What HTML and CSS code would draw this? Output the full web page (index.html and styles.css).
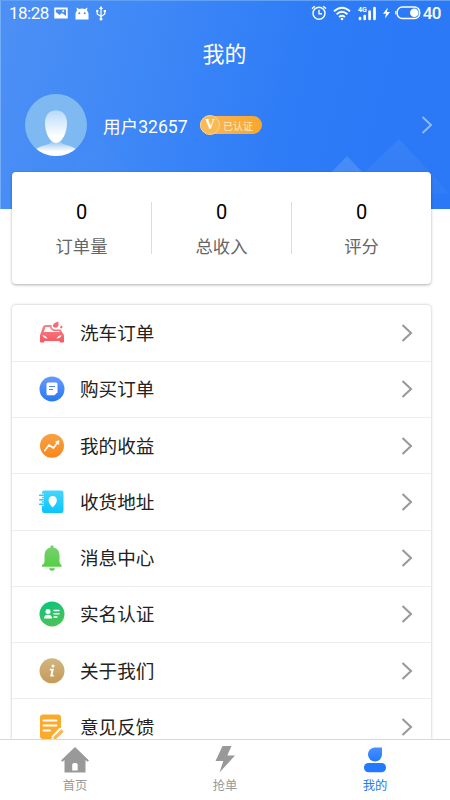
FILE: index.html
```html
<!DOCTYPE html>
<html lang="zh-CN">
<head>
<meta charset="utf-8">
<title>我的</title>
<link rel="stylesheet" href="styles.css">
</head>
<body>
<div class="app">
  <header class="header">
    <svg class="scenery" viewBox="0 0 450 209" aria-hidden="true">
      <defs><linearGradient id="hill" x1="0" y1="0" x2="0" y2="1"><stop offset="0" stop-color="#fff" stop-opacity=".06"/><stop offset="1" stop-color="#fff" stop-opacity=".03"/></linearGradient></defs>
      <path d="M399 139L450 194H342Z" fill="url(#hill)"/>
      <path d="M347 156L370 180H324Z" fill="#fff" fill-opacity=".13"/>
      <path d="M100 138L132 174H68Z" fill="#fff" fill-opacity=".015"/>
    </svg>
    <div class="status">
      <div class="status-left">
        <span class="clock">18:28</span>
        <svg class="s-pic" width="14" height="12" viewBox="0 0 14 12"><path fill="#fff" fill-rule="evenodd" d="M.3 .5H13.700V11.500H.3ZM1.800 2.500V5L5.500 8L8 6L12 9V2.500Z"/><circle cx="9.200" cy="4.300" r="1" fill="#fff"/></svg>
        <svg class="s-bot" width="14" height="13" viewBox="0 0 14 13"><path fill="#fff" fill-rule="evenodd" d="M1.500 .5L4 2Q7 .8 10 2L12.500 .5L12 3.500Q13.500 5 13.500 7V12.500H.5V7Q.5 5 2 3.500ZM4.300 5.300A1 1 0 1 0 4.310 7.300A1 1 0 1 0 4.300 5.300ZM9.700 5.300A1 1 0 1 0 9.710 7.300A1 1 0 1 0 9.700 5.300Z"/></svg>
        <svg class="s-usb" width="10" height="15" viewBox="0 0 10 15"><path d="M5 2V14M1.200 5V8L5 10.500M8.800 5V8L5 10.500" fill="none" stroke="#fff" stroke-width="1.200"/><path d="M5 0L7 3H3Z" fill="#fff"/><circle cx="5" cy="13" r="1.500" fill="#fff"/><circle cx="1.300" cy="5" r="1.200" fill="#fff"/><path d="M7.700 4H10V6.200H7.700Z" fill="#fff"/></svg>
      </div>
      <div class="status-right">
        <svg width="16" height="16" viewBox="0 0 16 16" fill="none" stroke="#fff" stroke-width="1.400"><circle cx="8" cy="8.300" r="6"/><path d="M8 4.800V8.700H11M1 3.600L3.800 1.200M12.200 1.200L15 3.600"/></svg>
        <svg class="s-wifi" width="18" height="15" viewBox="0 0 18 15" fill="none" stroke="#fff" stroke-width="1.900"><path d="M1 5.300Q9-1.900 17 5.300M3.600 8.200Q9 3.500 14.400 8.200M6.100 10.900Q9 8.500 11.900 10.900"/><circle cx="9" cy="13" r="1.300" fill="#fff" stroke="none"/></svg>
        <svg class="s-cell" width="19" height="15" viewBox="0 0 19 15"><text x="0" y="6" class="net">4G</text><path d="M2 12.200V13M6.700 10V13M11.600 5.500V13M16.500 2V13" stroke="#fff" stroke-width="2.700" stroke-linecap="round"/></svg>
        <svg class="s-bolt" width="7" height="12" viewBox="0 0 7 12"><path d="M4.800 .5L0 6.800H3L2 11.500L7 5H4Z" fill="#fff"/></svg>
        <svg class="s-batt" width="26" height="14" viewBox="0 0 26 14"><rect x="2.200" y="1" width="22.500" height="11.500" rx="5" fill="none" stroke="#fff" stroke-width="1.400"/><path d="M.8 5V8.500" stroke="#fff" stroke-width="1.200"/><circle cx="19.300" cy="6.800" r="4.300" fill="#fff"/></svg>
        <span class="level">40</span>
      </div>
    </div>
    <h1 class="title">我的</h1>
    <div class="profile">
      <svg class="avatar" viewBox="0 0 62 62">
        <defs><linearGradient id="face" x1="0" y1="0" x2="0" y2="1"><stop offset="0" stop-color="#b8dafa"/><stop offset=".8" stop-color="#fff"/></linearGradient>
        <linearGradient id="body" x1="0" y1="0" x2="0" y2="1"><stop offset="0" stop-color="#90c3f3"/><stop offset=".7" stop-color="#fff"/></linearGradient>
        <clipPath id="disc"><circle cx="31" cy="31" r="31"/></clipPath></defs>
        <g clip-path="url(#disc)"><path fill="#7eb9f1" d="M0 0H62V62H0Z"/><path fill="url(#body)" d="M8 57Q14 52 24 50L27 47H35L38 50Q48 52 54 57V62H8Z"/><path fill="url(#face)" d="M31 16.500C38.500 16.500 42 22 42 29C42 39 37 49 31 49C25 49 20 39 20 29C20 22 23.500 16.500 31 16.500Z"/></g>
      </svg>
      <span class="name">用户32657</span>
      <span class="badge"><span class="coin">V</span>已认证</span>
      <svg class="chev chev-light" viewBox="0 0 12 20"><path d="M1.500 2L10 10L1.500 18"/></svg>
    </div>
  </header>

  <section class="stats">
    <div class="stat"><span class="num">0</span><span class="lab">订单量</span></div>
    <div class="stat"><span class="num">0</span><span class="lab">总收入</span></div>
    <div class="stat"><span class="num">0</span><span class="lab">评分</span></div>
  </section>

  <main class="list">
    <div class="row">
      <svg class="icon" viewBox="0 0 26 26"><defs><linearGradient id="red" x1="0" y1="0" x2="0" y2="1"><stop offset="0" stop-color="#f4858a"/><stop offset="1" stop-color="#f9565f"/></linearGradient></defs><path fill="url(#red)" fill-rule="evenodd" d="M6.500 5H12.500Q12.200 8 14.500 9.300L16 9.500H21.500L23.500 12.700Q25 14 25 16V21.500Q25 22.500 24 22.500H21.500Q20.500 22.500 20.500 21H5.500Q5.500 22.500 4.500 22.500H2Q1 22.500 1 21.500V16Q1 14 2 12.500L4 6.500Q4.800 5 6.500 5ZM6.500 7L4.800 12H21L20 11H15Q11.500 10 11 7ZM3.500 15Q4 18.300 8.500 18.800Q7.500 15.800 3.500 15ZM22.500 15Q22 18.300 17.500 18.800Q18.500 15.800 22.500 15Z"/><path fill="#f56d74" d="M19.300 1.500Q20.500 7.500 17 7.800Q13.300 7.500 14 5Q15 2.700 19.300 1.500ZM23.200 5.300Q23.800 8.500 22.200 8.500Q20.300 8 21.300 6.500Z"/></svg>
      <span class="text">洗车订单</span><svg class="chev" viewBox="0 0 12 20"><path d="M1.500 2L10 10L1.500 18"/></svg>
    </div>
    <div class="row">
      <svg class="icon" viewBox="0 0 26 26"><defs><linearGradient id="blue" x1="0" y1="0" x2="0" y2="1"><stop offset="0" stop-color="#669bfa"/><stop offset="1" stop-color="#2877f5"/></linearGradient></defs><circle cx="13" cy="13" r="12.500" fill="url(#blue)"/><path fill="#fff" d="M9 6.500H17Q18.500 6.500 18.500 8V16.300L15.500 19.300H9Q7.500 19.300 7.500 17.800V8Q7.500 6.500 9 6.500Z"/><path d="M10 10.500H16M10 13.500H14" stroke="#4686f7" stroke-width="1.200"/></svg>
      <span class="text">购买订单</span><svg class="chev" viewBox="0 0 12 20"><path d="M1.500 2L10 10L1.500 18"/></svg>
    </div>
    <div class="row">
      <svg class="icon" viewBox="0 0 26 26"><defs><linearGradient id="orange" x1="0" y1="0" x2="0" y2="1"><stop offset="0" stop-color="#f7a343"/><stop offset="1" stop-color="#fb861c"/></linearGradient></defs><circle cx="13" cy="12.700" r="12" fill="url(#orange)"/><path d="M5.800 17.500L10 12L14.500 15L18.500 9.500" fill="none" stroke="#fff" stroke-width="1.700" stroke-linecap="round" stroke-linejoin="round"/><path d="M20 7.500L19.700 11.500L16.500 9Z" fill="#fff" stroke="#fff" stroke-width=".6"/></svg>
      <span class="text">我的收益</span><svg class="chev" viewBox="0 0 12 20"><path d="M1.500 2L10 10L1.500 18"/></svg>
    </div>
    <div class="row">
      <svg class="icon" viewBox="0 0 26 26"><defs><linearGradient id="cyan" x1="0" y1="0" x2="0" y2="1"><stop offset="0" stop-color="#47d5ff"/><stop offset="1" stop-color="#08c5fd"/></linearGradient></defs><rect x="3" y="1.500" width="21.500" height="22.500" rx="2.200" fill="url(#cyan)"/><path d="M.5 6.300H5M.5 10.800H5M.5 15.300H5" stroke="#fff" stroke-width="3"/><path d="M.7 6.300H4.500M.7 10.800H4.500M.7 15.300H4.500" stroke="#27ccfe" stroke-width="1.500" stroke-linecap="round"/><path fill="#fff" d="M13.700 7C16.300 7 17.800 9 17.800 11.200C17.800 14 16 16 13.700 18.500C11.400 16 9.600 14 9.600 11.200C9.600 9 11.100 7 13.700 7Z"/></svg>
      <span class="text">收货地址</span><svg class="chev" viewBox="0 0 12 20"><path d="M1.500 2L10 10L1.500 18"/></svg>
    </div>
    <div class="row">
      <svg class="icon" viewBox="0 0 26 26"><defs><linearGradient id="green" x1="0" y1="0" x2="0" y2="1"><stop offset="0" stop-color="#7bd16f"/><stop offset="1" stop-color="#55cf47"/></linearGradient></defs><path fill="url(#green)" d="M13 .3Q14.700 .3 14.700 2.500Q20.500 4 20.500 10V17Q20.700 19 22.500 20V21.800H3V20Q5.300 19 5.500 17V10Q5.500 4 11.300 2.500Q11.300 .3 13 .3Z"/><path fill="#57ca49" d="M10 23.300H16Q15.500 25.800 13 25.800Q10.500 25.800 10 23.300Z"/></svg>
      <span class="text">消息中心</span><svg class="chev" viewBox="0 0 12 20"><path d="M1.500 2L10 10L1.500 18"/></svg>
    </div>
    <div class="row">
      <svg class="icon" viewBox="0 0 26 26"><defs><linearGradient id="emerald" x1=".2" y1="0" x2=".5" y2="1"><stop offset="0" stop-color="#07c57c"/><stop offset="1" stop-color="#4dc257"/></linearGradient></defs><circle cx="13" cy="13" r="12.500" fill="url(#emerald)"/><circle cx="9" cy="10.500" r="2.500" fill="#fff"/><path fill="#fff" d="M5 17.500Q5 14 9 13.800Q13 14 13 17.500Z"/><path d="M14.500 9.500H20.500M14.500 12.800H20.500M14.500 16H18.500" stroke="#fff" stroke-width="1.500"/></svg>
      <span class="text">实名认证</span><svg class="chev" viewBox="0 0 12 20"><path d="M1.500 2L10 10L1.500 18"/></svg>
    </div>
    <div class="row">
      <svg class="icon" viewBox="0 0 26 26"><defs><linearGradient id="gold" x1="0" y1="0" x2="0" y2="1"><stop offset="0" stop-color="#d2b681"/><stop offset="1" stop-color="#c49a58"/></linearGradient></defs><circle cx="13" cy="12.800" r="12.500" fill="url(#gold)"/><circle cx="14" cy="7.900" r="1.500" fill="#fff"/><path d="M10.800 11.600H13.700L12.300 17.600H14.700" fill="none" stroke="#fff" stroke-width="1.900"/></svg>
      <span class="text">关于我们</span><svg class="chev" viewBox="0 0 12 20"><path d="M1.500 2L10 10L1.500 18"/></svg>
    </div>
    <div class="row">
      <svg class="icon" viewBox="0 0 26 26"><path fill="#fbaa2c" d="M4 .5H19Q22 .5 22 3.500V14L12 25H4Q1 25 1 22V3.500Q1 .5 4 .5Z"/><path d="M4.500 6.500H17.500M4.500 11.500H17.500M4.500 16.500H11" stroke="#fff" stroke-width="1.800" stroke-linecap="round"/><path d="M23 15.500L14.500 24.500" stroke="#fff" stroke-width="6"/><path d="M23.500 16.500L15 24.800" stroke="#fbb64e" stroke-width="3.200"/></svg>
      <span class="text">意见反馈</span><svg class="chev" viewBox="0 0 12 20"><path d="M1.500 2L10 10L1.500 18"/></svg>
    </div>
  </main>

  <nav class="tabs">
    <div class="tab"><svg viewBox="0 0 28 28"><path fill="#999" fill-rule="evenodd" d="M14 1L28 14.500L26.500 15.800L24.500 14V26.500H3.500V14L1.500 15.800L0 14.500ZM13.200 17Q11.200 17 11.200 19V24.500H16.700V19Q16.700 17 14.700 17Z"/></svg><span>首页</span></div>
    <div class="tab"><svg viewBox="0 0 28 28"><path fill="#999" d="M11.500 0H20.500L16.300 9.500H24L8.500 26.500L12.300 15H4.500Z"/></svg><span>抢单</span></div>
    <div class="tab active"><svg viewBox="0 0 28 28"><defs><linearGradient id="me" x1="0" y1="0" x2="0" y2="1"><stop offset="0" stop-color="#4890ff"/><stop offset="1" stop-color="#2379ff"/></linearGradient></defs><path fill="url(#me)" d="M14 1.500H21V8.500A7 7 0 1 1 14 1.500Z"/><rect x="3" y="17" width="22" height="9.200" rx="4.500" fill="#2379ff"/></svg><span>我的</span></div>
  </nav>
</div>
</body>
</html>
```
FILE: styles.css
```css
* { box-sizing: border-box; }
body { margin: 0; background: #fff; font-family: Roboto, "Noto Sans CJK SC", sans-serif; }
svg { display: block; flex: none; }

.app { width: 450px; height: 800px; overflow: hidden; display: flex; flex-direction: column; }

.header {
  position: relative; flex: none; height: 209px; color: #fff;
  background: linear-gradient(103deg, #4d90f5 0%, #3f88f6 30%, #2d7bf6 65%, #2a78f6 100%);
  border-top: 1px solid #60a1f6; border-left: 1px solid #72adf7;
}
.scenery { position: absolute; left: -1px; top: -1px; width: 450px; height: 209px; }

.status { position: relative; display: flex; justify-content: space-between; height: 24px; padding: 0 9px 0 8px; }
.status-left, .status-right { display: flex; align-items: center; }
.clock { font-size: 17px; width: 40px; letter-spacing: -.5px; }
.s-pic { margin-left: 5px; }
.s-bot { margin-left: 7px; }
.s-usb { margin-left: 7px; }
.s-wifi { margin-left: 6px; }
.s-cell { margin-left: 7px; }
.s-bolt { margin-left: 6px; }
.s-batt { margin-left: 5px; }
.net { font: 700 7px Roboto, sans-serif; fill: #fff; }
.level { margin-left: 2px; font-size: 17px; font-weight: 500; letter-spacing: -.5px; }

.title { position: relative; margin: 13px 2px 0 0; height: 34px; line-height: 34px; text-align: center; font-size: 22px; font-weight: 400; }

.profile { position: relative; display: flex; align-items: center; height: 62px; margin-top: 22px; padding: 0 17px 0 24px; }
.avatar { width: 62px; height: 62px; }
.name { margin-left: 16px; font-size: 17.600px; width: 97px; white-space: nowrap; }
.badge {
  display: flex; align-items: center; gap: 3px; width: 62px; height: 18px; padding: 0;
  font-size: 10px; color: #ffecc7; border-radius: 9px; white-space: nowrap;
  background: linear-gradient(90deg, #f9b85c, #f8a62c);
}
.coin {
  display: flex; align-items: center; justify-content: center; width: 20px; height: 20px;
  border: 1px solid #fbd58d; border-radius: 50%; background: #f9ba55;
  font: 700 14px "Liberation Serif", serif; color: #fff;
}

.chev { width: 12px; height: 20px; margin-left: auto; fill: none; stroke: #999; stroke-width: 2.100; }
.chev-light { stroke: #8fbcfa; stroke-width: 1.900; }

.stats {
  position: relative; flex: none; display: flex; align-items: center;
  width: 419px; height: 112px; margin: -37px 0 0 12px;
  background: #fff; border-radius: 4px; box-shadow: 0 1px 3px rgba(0, 0, 0, .32);
}
.stat { flex: 1; height: 52px; display: flex; flex-direction: column; align-items: center; justify-content: space-between; }
.stat + .stat { border-left: 1px solid #ddd; }
.num { font-size: 20px; line-height: 20px; color: #000; }
.lab { font-size: 17.300px; line-height: 14px; color: #666; }

.list {
  flex: 1; min-height: 0; overflow: hidden; width: 419px; margin: 21px 0 0 12px; padding-top: .5px;
  background: #fff; border-radius: 4px 4px 0 0; box-shadow: 0 0 3px rgba(0, 0, 0, .28);
}
.row { display: flex; align-items: center; height: 56.250px; padding: 0 18px 0 27px; border-bottom: 1px solid #ededed; }
.icon { width: 26px; height: 26px; }
.text { margin-left: 15px; padding-top: 2px; font-size: 18.600px; line-height: 28px; color: #222; }

.tabs { position: relative; flex: none; display: flex; height: 61px; background: #fff; border-top: 1px solid #d8d8d8; }
.tab { flex: 1; display: flex; flex-direction: column; align-items: center; padding-top: 6px; font-size: 12.300px; line-height: 18px; color: #999; }
.tab svg { width: 28px; height: 28px; }
.tab span { margin-top: 3px; }
.active { color: #2379f5; }
```
